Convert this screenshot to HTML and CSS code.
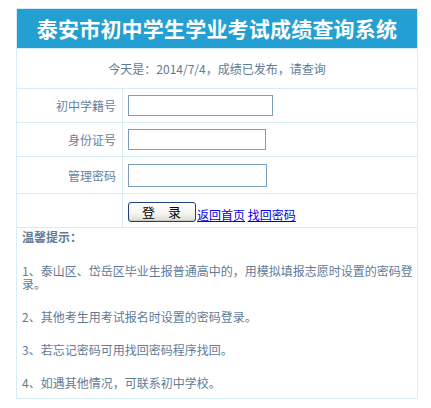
FILE: index.html
```html
<!DOCTYPE html>
<html lang="zh">
<head>
<meta charset="utf-8">
<title>泰安市初中学生学业考试成绩查询系统</title>
<link rel="stylesheet" href="styles.css">
</head>
<body>
<table class="main">
  <tr>
    <td colspan="2" class="title">泰安市初中学生学业考试成绩查询系统</td>
  </tr>
  <tr>
    <td colspan="2" class="today">今天是：2014/7/4，成绩已发布，请查询</td>
  </tr>
  <tr class="r1">
    <td class="label">初中学籍号</td>
    <td class="field"><input type="text" class="in in1"></td>
  </tr>
  <tr class="r2">
    <td class="label">身份证号</td>
    <td class="field"><input type="text" class="in in2"></td>
  </tr>
  <tr class="r3">
    <td class="label">管理密码</td>
    <td class="field"><input type="password" class="in in3"></td>
  </tr>
  <tr class="r4">
    <td class="label"></td>
    <td class="field actions"><button type="button" class="btn">登 录</button><a href="#" class="lnk">返回首页</a> <a href="#" class="lnk">找回密码</a></td>
  </tr>
  <tr>
    <td colspan="2" class="tips">
      <div class="tips-title">温馨提示：</div>
      <p>1、泰山区、岱岳区毕业生报普通高中的，用模拟填报志愿时设置的密码登录。</p>
      <p>2、其他考生用考试报名时设置的密码登录。</p>
      <p>3、若忘记密码可用找回密码程序找回。</p>
      <p class="last">4、如遇其他情况，可联系初中学校。</p>
    </td>
  </tr>
</table>
</body>
</html>
```
FILE: styles.css
```css
html, body {
  margin: 0;
  padding: 0;
  background: #ffffff;
}
body {
  padding-top: 8px;
  font-family: "Noto Sans CJK SC", "Liberation Sans", sans-serif;
  font-size: 12px;
  color: #5f7b98;
}
.main {
  width: 402px;
  margin: 0 0 0 16px;
  border-collapse: collapse;
  border-spacing: 0;
}
.main td {
  border: 1px solid #d7edf6;
  padding: 0;
}
.title {
  height: 39px;
  background: #23a0d1;
  color: #ffffff;
  font-size: 21px;
  font-weight: bold;
  text-align: center;
  line-height: 33px;
  padding-bottom: 5px;
  vertical-align: middle;
  letter-spacing: 0.2px;
}
.today {
  height: 39px;
  text-align: center;
  vertical-align: middle;
  padding-bottom: 2px;
}
.label {
  width: 99px;
  text-align: right;
  padding-right: 6px !important;
  vertical-align: middle;
  color: #6781a0;
}
.r1 td { height: 33px; }
.r2 td { height: 33px; }
.r3 td { height: 36px; }
.r4 td { height: 28px; }
.field {
  padding-left: 5px !important;
  vertical-align: middle;
}
.in {
  display: block;
  box-sizing: border-box;
  border: 1px solid #7e9db9;
  background: #fff;
  margin: 0;
  padding: 0 3px;
  font-size: 12px;
}
.in1 { width: 145px; height: 21px; }
.in2 { width: 138px; height: 21px; }
.in3 { width: 139px; height: 23px; }
.actions {
  vertical-align: bottom !important;
  padding-bottom: 5px !important;
  line-height: 14px;
}
.btn {
  box-sizing: border-box;
  width: 68px;
  height: 20px;
  margin: 0 1px 0 0;
  padding: 0;
  border: 1px solid #1f3f78;
  border-radius: 3px;
  background: linear-gradient(#ffffff 0%, #f4f4f0 60%, #dcdcd4 100%);
  box-shadow: inset 0 -1px 0 #c9c9bf;
  font-family: "Noto Sans CJK SC", sans-serif;
  font-size: 13px;
  color: #000;
  line-height: 16px;
  vertical-align: bottom;
  letter-spacing: 1px;
  word-spacing: 8px;
}
.lnk {
  color: #0000ee;
  text-decoration: underline;
  font-size: 12px;
  vertical-align: bottom;
}
.tips {
  padding: 2px 0 2px 5px !important;
  vertical-align: top;
  line-height: 13px;
  height: 166px;
}
.tips-title {
  font-weight: bold;
  color: #5f7b98;
  margin-bottom: 21px;
  margin-top: 0;
}
.tips p {
  margin: 0 0 20px 0;
}
.tips p.last {
  margin-bottom: 0;
}
```
